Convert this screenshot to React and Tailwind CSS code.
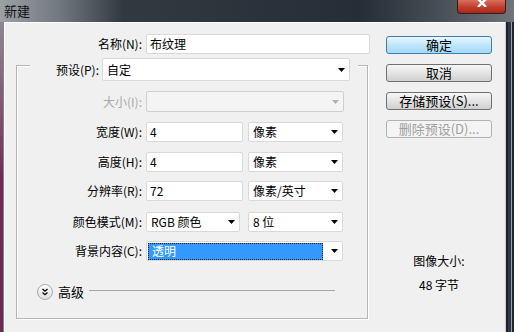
import React from 'react';

const Arrow = ({ disabled }) => (
  <svg width="7" height="4" viewBox="0 0 7 4" className="shrink-0">
    <path d="M0 0 H7 L3.5 4 Z" fill={disabled ? '#b0b0b0' : '#000'} />
  </svg>
);

const Field = ({ width, value }) => (
  <div
    className="h-[20px] bg-white border border-[#d9d9d9] rounded-[2px] pl-[3px] flex items-center leading-[14px]"
    style={{ width }}
  >
    {value}
  </div>
);

const Combo = ({ width, value, disabled, selected, h = 20 }) => (
  <div
    className={`border rounded-[2px] flex items-center pr-[4px] leading-[14px] ${
      disabled ? 'bg-[#f4f4f4] border-[#cfcfcf]' : 'bg-white border-[#d9d9d9]'
    }`}
    style={{ width, height: h }}
  >
    {selected ? (
      <div className="flex-1 ml-[1px] mr-[8px] h-[17px] bg-[#3399ff] outline outline-1 outline-dotted outline-[#222] -outline-offset-1 text-white pl-[4px] flex items-center">
        {value}
      </div>
    ) : (
      <div className="flex-1 pl-[4px]">{value}</div>
    )}
    <Arrow disabled={disabled} />
  </div>
);

const Row = ({ label, disabled, children, className = '' }) => (
  <div className={`flex items-center ${className}`}>
    <div className={`w-[125px] text-right leading-[14px] ${disabled ? 'text-[#a8a8a8]' : ''}`}>{label}</div>
    <div className="ml-[4px] flex gap-[5px]">{children}</div>
  </div>
);

const Button = ({ children, primary, disabled }) => {
  let tone = 'border-[#707070] bg-gradient-to-b from-[#f6f6f6] via-[#e4e4e4] to-[#cfcfcf] text-black';
  if (primary) tone = 'border-[#3c7fb1] bg-gradient-to-b from-[#eaf6fd] via-[#bee6fd] to-[#a7d9f5] text-black';
  if (disabled) tone = 'border-[#adb2b5] bg-[#f4f4f4] text-[#a0a0a0]';
  return (
    <div className={`w-[106px] h-[18px] rounded-[3px] border flex items-center justify-center text-[13px] leading-[14px] ${tone}`}>
      {children}
    </div>
  );
};

const AdvancedIcon = () => (
  <svg width="16" height="16" viewBox="0 0 16 16">
    <defs>
      <linearGradient id="adv" x1="0" y1="0" x2="0" y2="1">
        <stop offset="0" stopColor="#ffffff" />
        <stop offset="1" stopColor="#dcdcdc" />
      </linearGradient>
    </defs>
    <circle cx="8" cy="8" r="7.5" fill="url(#adv)" stroke="#a9a9a9" />
    <path d="M5.5 5 L8 7.2 L10.5 5 M5.5 8.5 L8 10.7 L10.5 8.5" fill="none" stroke="#000" strokeWidth="1.3" />
  </svg>
);

const App = () => {
  return (
    <div className="w-[514px] h-[332px] overflow-hidden flex flex-col text-[12px] text-black font-['Noto_Sans_CJK_SC','Noto_Sans',sans-serif]">
      {/* title bar */}
      <div className="h-[22px] shrink-0 flex bg-[linear-gradient(to_right,#9ca1a6_0%,#70767d_12%,#313941_24%,#252d36_70%,#434b53_84%,#6f757b_100%)]">
        <div className="pl-[4px] pt-[3px] text-[13px] leading-[16px] text-[#111]">新建</div>
        <div className="ml-auto mr-[8px] w-[49px] h-[14px] rounded-b-[4px] border border-t-0 border-[#3b1b17] bg-gradient-to-b from-[#d9705e] via-[#c3412f] to-[#a8281c] flex justify-center">
          <svg width="14" height="8" viewBox="0 0 14 8" className="mt-[-1px]">
            <path d="M3 0 L7 4 L11 0 M3 8 L7 4 L11 8" stroke="#fff" strokeWidth="2.4" fill="none" />
          </svg>
        </div>
      </div>

      <div className="flex flex-1 min-h-0">
        {/* left frame */}
        <div className="w-[4px] shrink-0 bg-gradient-to-b from-[#878b91] via-[#6e2c55] to-[#6b2a52] border-r border-[#9a7a8c]" />

        {/* client */}
        <div className="flex-1 bg-[#f0f0f0] border-t border-l border-white flex">
          <div className="w-[368px] shrink-0 flex flex-col">
            <div className="mt-[11px] flex items-center">
              <div className="w-[137px] text-right leading-[14px]">名称(N):</div>
              <div className="ml-[4px]">
                <Field width={224} value="布纹理" />
              </div>
            </div>

            {/* preset group */}
            <div className="mt-[11px] ml-[11px] w-[352px] h-[254px] border border-[#b5b5b5] shadow-[inset_1px_1px_0_#fff,1px_1px_0_#fff] flex flex-col">
              <div className="-mt-[8px] ml-[13px] w-[328px] h-[23px] bg-[#f0f0f0] flex items-center">
                <div className="w-[69px] text-right leading-[14px]">预设(P):</div>
                <div className="ml-[3px]">
                  <Combo width={248} h={23} value="自定" />
                </div>
              </div>

              <Row label="大小(I):" disabled className="mt-[10px]">
                <Combo width={198} h={21} disabled value="" />
              </Row>
              <Row label="宽度(W):" className="mt-[10px]">
                <Field width={97} value="4" />
                <Combo width={95} value="像素" />
              </Row>
              <Row label="高度(H):" className="mt-[10px]">
                <Field width={97} value="4" />
                <Combo width={95} value="像素" />
              </Row>
              <Row label="分辨率(R):" className="mt-[9px]">
                <Field width={97} value="72" />
                <Combo width={95} value="像素/英寸" />
              </Row>
              <Row label="颜色模式(M):" className="mt-[11px]">
                <Combo width={94} value="RGB 颜色" />
                <div className="ml-[3px]">
                  <Combo width={95} value="8 位" />
                </div>
              </Row>
              <Row label="背景内容(C):" className="mt-[9px]">
                <Combo width={197} value="透明" selected />
              </Row>

              <div className="mt-[23px] ml-[20px] mr-[32px] flex items-center">
                <AdvancedIcon />
                <div className="ml-[5px] text-[13px] leading-[16px]">高级</div>
                <div className="ml-[5px] flex-1 h-[2px] -mt-[3px] border-t border-[#a8a8a8] border-b-white" />
              </div>
            </div>
          </div>

          {/* buttons */}
          <div className="ml-[13px] w-[106px] flex flex-col">
            <div className="mt-[13px] flex flex-col gap-[10px]">
              <Button primary>确定</Button>
              <Button>取消</Button>
              <Button>存储预设(S)...</Button>
              <Button disabled>删除预设(D)...</Button>
            </div>
            <div className="mt-[115px] text-center leading-[16px]">图像大小:</div>
            <div className="mt-[8px] text-center leading-[16px]">48 字节</div>
          </div>
        </div>

        {/* right frame */}
        <div className="w-[9px] shrink-0 flex">
          <div className="w-[1px] bg-[#c8ccd0]" />
          <div className="w-[2px] bg-[#1c242d]" />
          <div className="w-[3px] bg-[#2c3948]" />
          <div className="w-[1px] bg-[#9aa0a6]" />
          <div className="w-[2px] bg-[#20262e]" />
        </div>
      </div>
    </div>
  );
};

export default App;
